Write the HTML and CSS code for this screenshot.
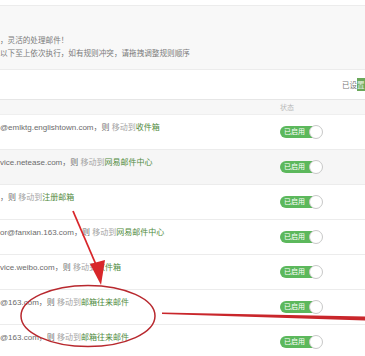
FILE: index.html
```html
<!DOCTYPE html>
<html>
  <head>
    <meta charset="UTF-8" />
    <title>收信规则</title>
    <link rel="stylesheet" href="styles.css">
  </head>
  <body>
    <div class="page">
      <div class="tips">
        <p>，灵活的处理邮件！</p>
        <p>以下至上依次执行，如有规则冲突，请拖拽调整规则顺序</p>
      </div>

      <div class="toolbar">
        <span class="count">已设</span><span class="count-btn">置</span>
      </div>

      <div class="rules">
        <div class="rule-head">
          <span></span>
          <span class="col-state">状态</span>
        </div>

        <div class="rule">
          <span class="desc">@emlktg.englishtown.com，则 <em>移动到</em><b>收件箱</b></span>
          <span class="switch"><i>已启用</i></span>
        </div>
        <div class="rule alt">
          <span class="desc">vice.netease.com，则 <em>移动到</em><b>网易邮件中心</b></span>
          <span class="switch"><i>已启用</i></span>
        </div>
        <div class="rule">
          <span class="desc">，则 <em>移动到</em><b>注册邮箱</b></span>
          <span class="switch"><i>已启用</i></span>
        </div>
        <div class="rule">
          <span class="desc">or@fanxian.163.com，则 <em>移动到</em><b>网易邮件中心</b></span>
          <span class="switch"><i>已启用</i></span>
        </div>
        <div class="rule">
          <span class="desc">vice.weibo.com，则 <em>移动到</em><b>收件箱</b></span>
          <span class="switch"><i>已启用</i></span>
        </div>
        <div class="rule">
          <span class="desc">@163.com，则 <em>移动到</em><b>邮箱往来邮件</b></span>
          <span class="switch"><i>已启用</i></span>
        </div>
        <div class="rule">
          <span class="desc">@163.com，则 <em>移动到</em><b>邮箱往来邮件</b></span>
          <span class="switch"><i>已启用</i></span>
        </div>
      </div>

      <!-- red marks drawn over the screenshot -->
      <svg class="marks" width="365" height="356" viewBox="0 0 365 356">
        <line x1="73" y1="211" x2="97" y2="267" stroke="#d8262a" stroke-width="1.8" />
        <polygon points="90,264 105,260 101,285" fill="#d8262a" />
        <ellipse cx="88" cy="316" rx="67" ry="30.5" fill="none" stroke="#b8282e" stroke-width="1.5" />
        <polygon points="162,312.5 365,316.5 365,320.5 162,314" fill="#c9262b" />
      </svg>
    </div>
  </body>
</html>
```

FILE: styles.css
```css
html, body {
  margin: 0;
  padding: 0;
  background: #fff;
  overflow: hidden;
}

.page {
  position: relative;
  width: 365px;
  height: 356px;
  overflow: hidden;
  font-family: "Liberation Sans", "Noto Sans CJK SC", sans-serif;
  font-size: 8px;
  color: #6b6b6b;
}

/* Tip box */
.tips {
  margin-top: 5px;
  height: 65px;
  box-sizing: border-box;
  padding-top: 28px;
  background: #f8f8f8;
  border-top: 1px solid #ececec;
  border-bottom: 1px solid #ececec;
}

.tips p {
  margin: 0;
  font-size: 7.6px;
  line-height: 13px;
  color: #7a7a7a;
}

/* Toolbar */
.toolbar {
  height: 29px;
  display: flex;
  justify-content: flex-end;
  align-items: center;
  border-bottom: 1px solid #e6e6e6;
  font-size: 7.5px;
}

.count {
  color: #777;
}

.count-btn {
  padding: 1px 0;
  width: 8px;
  background: #6aa85a;
  color: #e8f3e4;
  overflow: hidden;
}

/* Rule table */
.rule-head {
  display: grid;
  grid-template-columns: 1fr 85px;
  height: 14px;
  align-items: center;
  background: #f7f7f7;
  border-bottom: 1px solid #efefef;
  color: #b8b8b8;
  font-size: 7px;
}

.rule {
  display: grid;
  grid-template-columns: 1fr 85px;
  height: 35px;
  border-bottom: 1px solid #ececec;
  box-sizing: border-box;
}

.rule.alt {
  background: #f6f6f6;
}

.desc {
  padding-top: 8px;
  line-height: 10px;
  white-space: nowrap;
}

.desc em {
  font-style: normal;
  color: #a5a5a5;
}

.desc b {
  font-weight: normal;
  color: #4f8a3c;
}

/* Toggle */
.switch {
  align-self: center;
  position: relative;
  width: 42px;
  height: 12px;
  border-radius: 7px;
  background: #5cb85c;
}

.switch i {
  display: block;
  font-style: normal;
  color: #fff;
  font-size: 7px;
  line-height: 12px;
  padding-left: 4px;
}

.switch:after {
  content: "";
  position: absolute;
  right: -1px;
  top: -1px;
  width: 12px;
  height: 12px;
  border-radius: 50%;
  background: #fff;
  border: 1px solid #c8c8c8;
}

.marks {
  position: absolute;
  left: 0;
  top: 0;
}
```
